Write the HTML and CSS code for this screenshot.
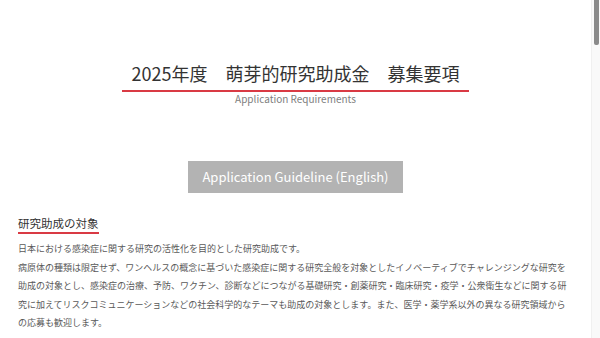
FILE: index.html
```html
<!DOCTYPE html>
<html lang="ja">
<head>
<meta charset="utf-8">
<title>2025年度 萌芽的研究助成金 募集要項</title>
<link rel="stylesheet" href="styles.css">
</head>
<body>
<div class="page">
  <main class="content">
    <header class="header">
      <h1 class="title">2025年度　萌芽的研究助成金　募集要項</h1>
      <p class="subtitle">Application Requirements</p>
    </header>
    <div class="actions">
      <a class="btn" href="#">Application Guideline (English)</a>
    </div>
    <section class="section">
      <h2 class="section-title">研究助成の対象</h2>
      <p class="text">日本における感染症に関する研究の活性化を目的とした研究助成です。<br>病原体の種類は限定せず、ワンヘルスの概念に基づいた感染症に関する研究全般を対象としたイノベーティブでチャレンジングな研究を助成の対象とし、感染症の治療、予防、ワクチン、診断などにつながる基礎研究・創薬研究・臨床研究・疫学・公衆衛生などに関する研究に加えてリスクコミュニケーションなどの社会科学的なテーマも助成の対象とします。また、医学・薬学系以外の異なる研究領域からの応募も歓迎します。</p>
    </section>
  </main>
  <div class="scrollbar"><div class="thumb"></div></div>
</div>
</body>
</html>
```

FILE: styles.css
```css
html, body {
  margin: 0;
  padding: 0;
  height: 100%;
  overflow: hidden;
  background: #ffffff;
}
body {
  font-family: "Noto Sans CJK JP", "Noto Sans", sans-serif;
  color: #333333;
}
.page {
  display: flex;
  height: 338px;
}
.content {
  flex: 1;
  padding: 0 18px;
  min-width: 0;
}
.header {
  display: flex;
  flex-direction: column;
  align-items: center;
  padding-top: 60px;
}
.title {
  margin: 0;
  padding: 0 10px 4px;
  font-size: 18px;
  line-height: 26px;
  font-weight: 400;
  color: #333333;
  border-bottom: 2px solid #d93a44;
  white-space: nowrap;
}
.subtitle {
  margin: 0;
  font-size: 10px;
  line-height: 14px;
  color: #808080;
}
.actions {
  display: flex;
  justify-content: center;
  margin-top: 55px;
}
.btn {
  display: block;
  height: 32px;
  line-height: 32px;
  padding: 0 14px;
  background: #b3b3b3;
  color: #ffffff;
  font-size: 13px;
  text-decoration: none;
}
.section {
  margin-top: 16px;
}
.section-title {
  display: inline-block;
  margin: 0;
  padding-bottom: 1px;
  font-size: 11.5px;
  line-height: 16px;
  font-weight: 400;
  color: #333333;
  border-bottom: 2px solid #d93a44;
}
.text {
  margin: 6px 0 0;
  font-size: 9px;
  line-height: 18.5px;
  color: #595959;
}
.scrollbar {
  width: 9px;
  background: #f9f9f9;
  border-left: 1px solid #f0f0f0;
  box-sizing: border-box;
  display: flex;
  justify-content: center;
}
.thumb {
  width: 5px;
  height: 45px;
  background: #8a8a8a;
  border-radius: 0 0 2px 2px;
}
```
